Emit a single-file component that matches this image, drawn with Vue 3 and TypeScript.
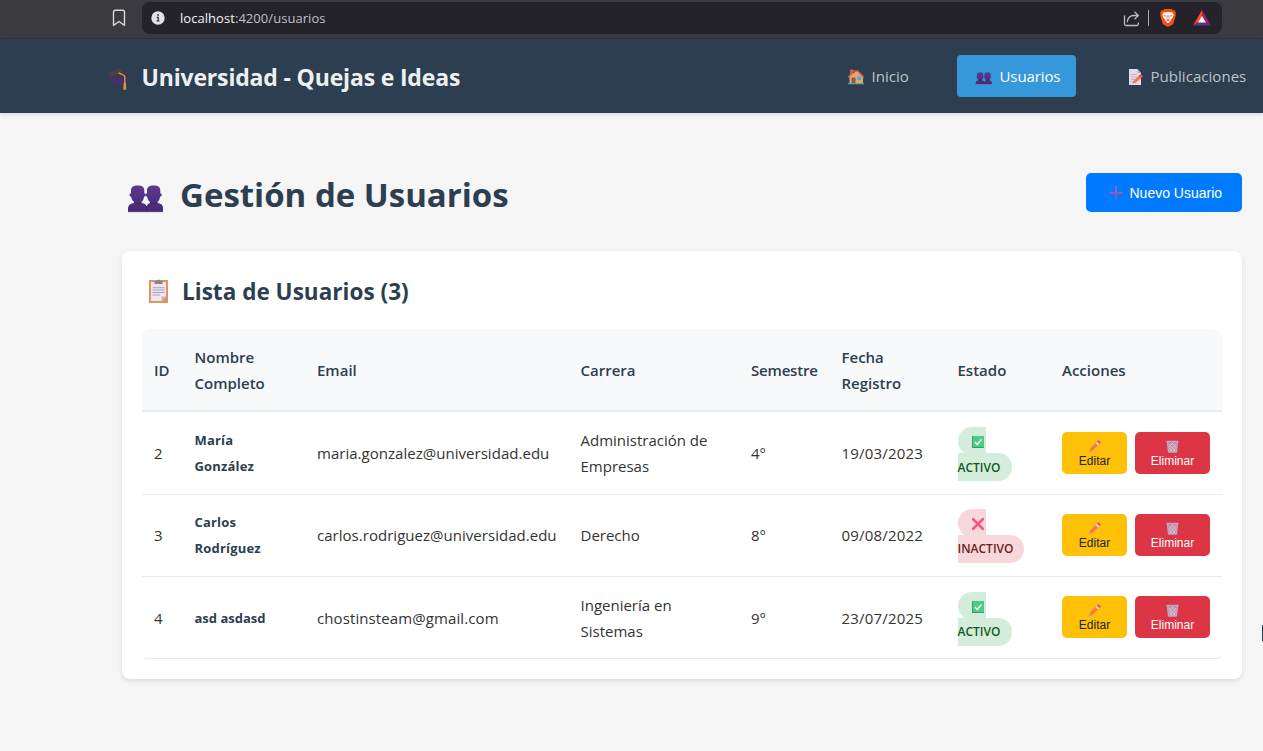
<script setup lang="ts">
interface User {
  id: number
  name: string[]
  email: string
  mailClass: string
  career: string[]
  semester: string
  date: string
  active: boolean
}

const users: User[] = [
  { id: 2, name: ['María', 'González'], email: 'maria.gonzalez@universidad.edu', mailClass: 'mail-a', career: ['Administración de', 'Empresas'], semester: '4°', date: '19/03/2023', active: true },
  { id: 3, name: ['Carlos', 'Rodríguez'], email: 'carlos.rodriguez@universidad.edu', mailClass: 'mail-b', career: ['Derecho'], semester: '8°', date: '09/08/2022', active: false },
  { id: 4, name: ['asd asdasd'], email: 'chostinsteam@gmail.com', mailClass: 'mail-c', career: ['Ingeniería en', 'Sistemas'], semester: '9°', date: '23/07/2025', active: true },
]
</script>

<template>
  <svg class="defs" width="0" height="0">
    <defs>
      <linearGradient id="purple" x1="0" y1="0" x2="0" y2="1">
        <stop offset="0" stop-color="#5b3a91" /><stop offset=".6" stop-color="#50307f" /><stop offset="1" stop-color="#482b72" />
      </linearGradient>
      <linearGradient id="cross" x1="0" y1="0" x2="0" y2="1">
        <stop offset="0" stop-color="#a061c4" /><stop offset="1" stop-color="#8054b8" />
      </linearGradient>
      <symbol id="people" viewBox="0 0 36 28">
        <g fill="url(#purple)">
          <path d="M3 5.500C3 2 5 .5 9.700.5S16.300 2 16.300 5.500V8.200q1.500 0 1.500 1.700T16.200 11.600Q15.800 15 13.500 17v1q5.500.5 5.500 5V27H0v-4q.5-4.500 6-5v-1Q3.400 15 3 11.600 1.500 11.600 1.500 9.900T3 8.200z" />
          <path d="M19 5.500C19 2 21 .5 25.700.5S32.300 2 32.300 5.500v2.700q1.500 0 1.500 1.700t-1.600 1.700Q31.800 15 29.500 17v1q5.500.5 5.500 5v4H18.500v-4q.5-4.500 3.500-5v-1q-2.600-2-3-5.400-1.500 0-1.500-1.700T19 8.200z" />
        </g>
        <path d="M.5 27.300h34.500" stroke="#cfc6dc" stroke-width=".7" />
        <path d="M6 17.500q4 1.500 7.500 0M22 17.500q4 1.500 7.500 0" stroke="#38215e" fill="none" stroke-width=".9" />
        <path d="M18.500 21v5.800" stroke="#38215e" stroke-width=".7" />
      </symbol>
    </defs>
  </svg>

  <div class="page">
    <div class="browser">
      <svg class="bookmark" width="14" height="18" viewBox="0 0 14 18">
        <path d="M1.500 3q0-1.800 1.800-1.800h7.400q1.800 0 1.800 1.800v13.300L7 12.500l-5.500 3.800z" fill="none" stroke="#d8d7dc" stroke-width="1.400" stroke-linejoin="round" />
      </svg>
      <div class="address">
        <svg width="14" height="14" viewBox="0 0 14 14">
          <circle cx="7" cy="7" r="6.700" fill="#e2e1e8" />
          <path d="M5.800 6.300H7.200V10M5.600 10h3" stroke="#242329" stroke-width="1.200" fill="none" />
          <circle cx="7" cy="3.900" r=".9" fill="#242329" />
        </svg>
        <span class="url"><b>localhost</b>:4200/usuarios</span>
        <svg class="share" width="17" height="17" viewBox="0 0 17 17">
          <path d="M1.500 5.500v8.500q0 1.500 1.500 1.500h11q1.300 0 1.300-1.500v-1.500M4.300 12.300q.3-6.300 6-6.800h4.500M11.500 1.800l3.800 3.700-3.800 3.700" fill="none" stroke="#bcbbc1" stroke-width="1.300" />
        </svg>
        <i class="divider"></i>
        <svg class="shield" width="16" height="18" viewBox="0 0 16 18">
          <path d="M4.500 0h7l1.400 1.500 1.700-.2L16 4l-.5 1.600.3 1L13.600 14q-.4 1-1.300 1.700L8 18l-4.300-2.300Q2.800 15 2.400 14L.2 6.600l.3-1L0 4l1.400-2.700 1.700.2z" fill="#fa4e12" />
          <path d="M4.200 3l2.300.4L8 3l1.500.4 2.300-.4 2 2.700-1.300 3L10.700 11l-.4 1.400L8 14.300l-2.300-1.900L5.300 11 3.500 8.700l-1.300-3z" fill="#fff" />
          <path d="M4 6.600l2.700.7M12 6.600l-2.700.7M8 6v3.200M6.500 9.700L8 10.500l1.500-.8M6.500 12L8 11.300l1.500.7" stroke="#fa4e12" stroke-width=".9" fill="none" />
        </svg>
        <svg class="bat" width="18" height="16" viewBox="0 0 18 16">
          <path d="M9 0L0 15.500 6 11.500 9 6.500z" fill="#ff4a22" />
          <path d="M9 0l9 15.500-6-4L9 6.500z" fill="#9e1f63" />
          <path d="M0 15.500l6-4h6l6 4z" fill="#662d91" />
          <path d="M9 6l4 6.500H5z" fill="#fff" />
        </svg>
      </div>
    </div>

    <header class="header">
      <svg width="24" height="23" viewBox="0 0 24 23">
        <path d="M3 7.500V13q2 3.500 8 3.500T18.500 14V7z" fill="#4c2d70" />
        <path d="M11.500 0L0 5.500 9.500 12 23.500 5z" fill="#3f3848" />
        <path d="M11.500 0L0 5.500l5 3L17 2.500z" fill="#4a404c" />
        <path d="M11.500 4.800L16.500 7q1.300.600 1.300 2v7" stroke="#e5a044" stroke-width="1.300" fill="none" />
        <path d="M16.700 15h2.200l.4 6.500q-1.500.8-3 0z" fill="#f08a48" />
      </svg>
      <span class="brand">Universidad - Quejas e Ideas</span>
      <nav>
        <a class="home">
          <svg width="18" height="18" viewBox="0 0 18 18">
            <path d="M3 1.500h3V7H3z" fill="#b9655f" />
            <path d="M2.500 8L10 2.500 16 8v7.500H2.500z" fill="#e9a46c" />
            <path d="M4.500 9.500h4v6h-4z" fill="#8c5952" /><path d="M10.500 8.500H14V12h-3.500z" fill="#35aee9" />
            <path d="M1.300 9.500L6.500 3h4.300l6 6.500" fill="none" stroke="#df5a45" stroke-width="1.500" />
            <path d="M1 15h16v1.300H1z" fill="#4eb38b" />
          </svg>
          <span>Inicio</span>
        </a>
        <a class="people-link">
          <svg width="18" height="13"><use href="#people" /></svg>
          <span>Usuarios</span>
        </a>
        <a class="posts">
          <svg width="18" height="18" viewBox="0 0 18 18">
            <path d="M3 1h8.500l3.500 4v12H3z" fill="#e4dced" /><path d="M11.500 1v4H15z" fill="#b5a8c4" />
            <path d="M5 6.500h6M5 9h7M5 11.500h4M5 14h3" stroke="#bab0c8" />
            <path d="M6.500 15.500l1.300-3 6-5.500 2.200 2.200-6 5.500z" fill="#f47b49" /><path d="M12.500 8.200L14.800 6 17 8.200l-2.200 2.200z" fill="#ef4b59" />
          </svg>
          <span>Publicaciones</span>
        </a>
      </nav>
    </header>

    <main>
      <div class="title-row">
        <svg width="36" height="28"><use href="#people" /></svg>
        <h1>Gestión de Usuarios</h1>
        <button class="new">
          <svg width="14" height="14" viewBox="0 0 14 14"><path d="M6 0h2v6h6v2H8v6H6V8H0V6h6z" fill="url(#cross)" /></svg>
          <span>Nuevo Usuario</span>
        </button>
      </div>

      <section class="card">
        <div class="card-title">
          <svg width="20" height="24" viewBox="0 0 20 24">
            <path d="M0 1h19v23H0z" fill="#df955c" />
            <path d="M2 3h15v14.500L12.500 22H2z" fill="#ece5f4" /><path d="M12.500 22v-4.500H17z" fill="#c5b6d5" />
            <path d="M5.500 5V3q0-1 1.500-1h.8q.3-1.500 1.700-1.500T11.200 2H12q1.500 0 1.500 1v2z" fill="#8b7f91" />
            <path d="M3.500 8.700h12M3.500 11h12M3.500 13.500h12M3.500 16h7.500" stroke="#ada1bd" />
          </svg>
          <h2>Lista de Usuarios (3)</h2>
        </div>
        <table>
          <colgroup>
            <col class="c-id" /><col class="c-name" /><col class="c-mail" /><col class="c-career" />
            <col class="c-sem" /><col class="c-date" /><col class="c-state" /><col class="c-act" />
          </colgroup>
          <thead>
            <tr>
              <th>ID</th><th>Nombre<br />Completo</th><th>Email</th><th>Carrera</th>
              <th class="sem">Semestre</th><th>Fecha<br />Registro</th><th>Estado</th><th>Acciones</th>
            </tr>
          </thead>
          <tbody>
            <tr v-for="u in users" :key="u.id">
              <td>{{ u.id }}</td>
              <td class="name"><div v-for="n in u.name" :key="n">{{ n }}</div></td>
              <td><span :class="u.mailClass">{{ u.email }}</span></td>
              <td><div v-for="c in u.career" :key="c">{{ c }}</div></td>
              <td>{{ u.semester }}</td>
              <td class="date">{{ u.date }}</td>
              <td>
                <div class="badge" :class="{ off: !u.active }">
                  <span class="mark">
                    <svg v-if="u.active" width="12" height="12" viewBox="0 0 12 12">
                      <path d="M0 0h12v12H0z" fill="#4ccc84" /><path d="M0 11h12v1H0zM0 0h1v12H0z" fill="#2fa36e" />
                      <path d="M2.800 6l2.400 2.500 4.300-5" stroke="#fff" stroke-width="1.400" fill="none" />
                    </svg>
                    <svg v-else width="12" height="12" viewBox="0 0 12 12">
                      <path d="M1 1l10 10M11 1L1 11" stroke="#f9577f" stroke-width="2.500" stroke-linecap="round" />
                    </svg>
                  </span>
                  <span class="label">{{ u.active ? 'ACTIVO' : 'INACTIVO' }}</span>
                </div>
              </td>
              <td class="act-cell">
                <div class="actions">
                  <button class="edit">
                    <svg width="13" height="13" viewBox="0 0 13 13">
                      <path d="M.5 12.500l1.200-3.700 2.500 2.500z" fill="#cf9a72" />
                      <path d="M1.700 8.800L8.200 2.300l2.500 2.500-6.500 6.500z" fill="#f9793e" />
                      <path d="M7.500 3l1.300-1.300 2.500 2.500L10 5.500z" fill="#e8dff0" />
                      <path d="M8.800 1.700L10 .5q.6-.5 1.200 0l1.300 1.300q.5.600 0 1.200l-1.200 1.200z" fill="#f4516c" />
                    </svg>
                    <span>Editar</span>
                  </button>
                  <button class="delete">
                    <svg width="13" height="13" viewBox="0 0 13 13">
                      <path d="M1.300 2h10.400l-1 10.300H2.300z" fill="#c58ca8" />
                      <path d="M3 4l6.500 7.500M6 3l4 4.500M3 7.500L6.500 12M10 4l-6.500 7.500M7 3L3 7.500M10 7.500L6.500 12" stroke="#dfd3e2" stroke-width=".7" />
                      <path d="M.5 1.500h12M2.300 12h8.400M1.500 2l1 10M11.500 2l-1 10" stroke="#b9a9c4" stroke-width="1.300" />
                    </svg>
                    <span>Eliminar</span>
                  </button>
                </div>
              </td>
            </tr>
          </tbody>
        </table>
      </section>
    </main>
    <i class="edge"></i>
  </div>
</template>

<style>
body { margin: 0; background: #f5f5f5; overflow: hidden; }
</style>

<style scoped>
* { box-sizing: border-box; }
.defs { position: absolute; }
.page { position: relative; width: 1263px; height: 751px; overflow: hidden; background: #f5f5f5; color: #333; font: 15px/25.6px "Open Sans", "Noto Sans", sans-serif; white-space: nowrap; }
svg { display: block; flex: none; }
.browser { height: 39px; background: #3b3a3f; border-bottom: 1px solid #323337; display: flex; align-items: flex-start; padding: 2px 0 0 112px; }
.bookmark { margin: 7px 16px 0 0; }
.address { width: 1080px; height: 32px; border-radius: 8px; background: #242329; display: flex; align-items: center; padding-left: 9px; }
.url { margin-left: 15px; font-size: 13px; color: #c0bfc6; line-height: 20px; width: 943px; letter-spacing: .05px; }
.url b { font-weight: 400; color: #f2f1f7; }
.divider { width: 1px; height: 16px; background: #aaa9af; margin: 0 11px 0 8px; }
.bat { margin-left: 17px; }
.header { position: relative; height: 74px; background: #2c3e50; box-shadow: 0 2px 4px rgba(0, 0, 0, .1); display: flex; align-items: flex-start; padding: 16px 0 0 107px; }
.header > svg { margin-top: 13px; }
.brand { margin: 5px 0 0 10.500px; width: 687.500px; font-size: 23px; line-height: 34px; font-weight: 700; color: #ecf0f1; letter-spacing: -.17px; }
nav { display: flex; gap: 32px; }
nav a { height: 42px; border-radius: 4px; display: flex; align-items: center; padding-left: 18px; gap: 6.500px; color: #bdc3c7; font-size: 15px; letter-spacing: .04px; }
nav a svg { margin-top: 1px; }
nav a span { margin-top: 1px; }
.home { width: 96px; }
.people-link { width: 119px; background: #3498db; color: #fff; }
.people-link svg { margin-top: 4px; }
.people-link span { letter-spacing: -.1px; }
.posts { width: 154px; }
main { padding: 60px 21px 0 122px; }
.title-row { height: 78px; display: flex; align-items: flex-start; padding-left: 6px; }
.title-row > svg { margin-top: 12px; }
h1 { margin: 0 0 0 16px; flex: 1; font-size: 33px; line-height: 44px; font-weight: 700; color: #2c3e50; }
button { border: 0; border-radius: 5px; font-family: "Liberation Sans", Arial, sans-serif; color: #fff; }
.new { width: 156px; height: 39px; background: #007bff; padding: 0 0 0 23px; display: flex; align-items: center; gap: 6.500px; font-size: 14px; }
.card { height: 428px; background: #fff; border-radius: 8px; box-shadow: 0 2px 4px rgba(0, 0, 0, .1); padding: 0 20px; }
.card-title { height: 78px; display: flex; align-items: flex-start; padding: 28px 0 0 7px; }
h2 { margin: -3px 0 0 13px; font-size: 22.500px; line-height: 32px; font-weight: 700; color: #2c3e50; letter-spacing: .03px; }
table { width: 1080px; table-layout: fixed; border-collapse: separate; border-spacing: 0; }
.c-id { width: 40.500px; } .c-name { width: 122.500px; } .c-mail { width: 263.500px; } .c-career { width: 170.500px; }
.c-sem { width: 90.500px; } .c-date { width: 116px; } .c-state { width: 104.500px; } .c-act { width: 172px; }
th, td { padding: 2px 12px 0; text-align: left; vertical-align: middle; }
th { height: 83px; background: #f8f9fb; border-bottom: 2px solid #e9ecef; color: #2c3e50; font-weight: 600; }
th:first-child { border-top-left-radius: 8px; }
th:last-child { border-top-right-radius: 8px; }
.sem { letter-spacing: -.18px; }
td { height: 82px; border-bottom: 1px solid #e9ecef; background: #fff; }
tbody tr:first-child td { height: 83px; }
tbody tr:nth-child(2) td { padding-top: 1px; padding-bottom: 1px; }
tbody tr:last-child { background: #efefef; }
tbody tr:last-child td:first-child { border-bottom-left-radius: 6px; }
tbody tr:last-child td:last-child { border-bottom-right-radius: 6px; }
.name { font-size: 13px; font-weight: 700; color: #2c3e50; letter-spacing: .18px; }
tr:last-child .name { letter-spacing: 0; }
.date { letter-spacing: .18px; }
.mail-a, .mail-b { letter-spacing: .03px; }
.mail-c { letter-spacing: .1px; }
.badge { display: flex; flex-direction: column; align-items: flex-start; color: #155724; font-size: 12px; font-weight: 600; }
.mark, .label { background: #d4edda; height: 28px; display: flex; align-items: center; }
.mark { width: 28px; padding: 2px 0 0 14px; border-radius: 14px 0 0 14px; }
.label { width: 54px; margin-top: -2px; padding-top: 1px; border-radius: 0 14px 14px 0; }
.off { color: #721c24; }
.off .mark, .off .label { background: #f8d7da; }
.off .label { width: 66px; }
tbody tr .act-cell { padding-top: 0; }
tbody tr:not(:first-child) .act-cell { padding-top: 0; padding-bottom: 1px; }
.actions { display: flex; gap: 8px; }
.actions button { height: 42px; padding: 8px 0 0; display: flex; flex-direction: column; align-items: center; font-size: 12px; line-height: 14px; }
.actions span { margin-top: 1px; }
.edit { width: 65px; background: #ffc107; color: #212529; }
.delete { width: 75px; background: #dc3545; }
.edge { position: absolute; right: 0; top: 625px; width: 1px; height: 16px; background: #2c3e50; }
</style>
